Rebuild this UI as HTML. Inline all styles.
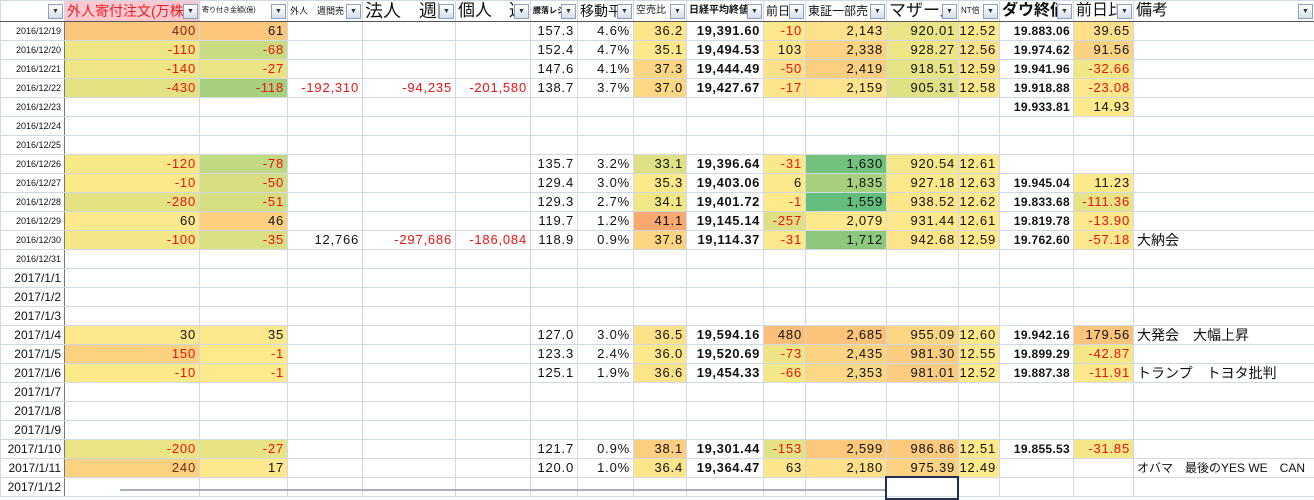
<!DOCTYPE html>
<html><head><meta charset="utf-8">
<style>
body{margin:0;width:1314px;height:491px;overflow:hidden;background:#fff;font-family:"Liberation Sans","Noto Sans CJK JP",sans-serif;}
table{border-collapse:collapse;table-layout:fixed;position:absolute;left:0;top:0;width:1314px;}
td{border:1px solid #d0d7e5;height:18px;padding:0 3px 0 0;text-align:right;font-size:13px;letter-spacing:0.8px;white-space:nowrap;overflow:hidden;color:#111;line-height:18px;}
tr.h td{height:20px;border-bottom:1px solid #555;text-align:left;padding:0 0 0 2px;position:relative;letter-spacing:0;}
td.d{font-size:9px;letter-spacing:0;border-right:1px solid #777;}
td.d2{font-size:12px;letter-spacing:0;border-right:1px solid #777;}
.r{color:#f01010}
.m{color:#802010}
.b{font-weight:bold;letter-spacing:0.6px}
.db{font-weight:bold;font-size:12px;letter-spacing:0.3px}
td.n{text-align:left;padding-left:3px;font-size:14px;letter-spacing:0}
.f{position:absolute;right:1px;top:3px;width:13px;height:13px;border:1px solid #8aa0c0;background:linear-gradient(#fff,#d6deea);font-size:7px;line-height:13px;text-align:center;color:#333;}
.hd{display:block;overflow:hidden;white-space:nowrap;margin-right:16px;}
</style></head><body>
<table>
<colgroup><col style="width:64px"><col style="width:135px"><col style="width:88px"><col style="width:75px"><col style="width:93px"><col style="width:75px"><col style="width:47px"><col style="width:56px"><col style="width:53px"><col style="width:77px"><col style="width:42px"><col style="width:81px"><col style="width:72px"><col style="width:41px"><col style="width:74px"><col style="width:60px"><col style="width:181px"></colgroup>
<tr class="h">
<td><span class="f">▼</span></td>
<td style="background:#ffc7ce;color:#e8202a;font-size:14px"><span class="hd">外人寄付注文(万株)</span><span class="f">▼</span></td>
<td style="font-size:7px"><span class="hd">寄り付き金額(億)</span><span class="f">▼</span></td>
<td style="font-size:9px"><span class="hd">外人　週間売</span><span class="f">▼</span></td>
<td style="font-size:18px"><span class="hd">法人　週間</span><span class="f">▼</span></td>
<td style="font-size:17px"><span class="hd">個人　週</span><span class="f">▼</span></td>
<td style="font-size:8px;font-weight:bold"><span class="hd">騰落レシオ</span><span class="f">▼</span></td>
<td style="font-size:14px"><span class="hd">移動平</span><span class="f">▼</span></td>
<td style="font-size:10px"><span class="hd">空売比</span><span class="f">▼</span></td>
<td style="font-size:10px;font-weight:bold"><span class="hd">日経平均終値</span><span class="f">▼</span></td>
<td style="font-size:12px"><span class="hd">前日</span><span class="f">▼</span></td>
<td style="font-size:12px"><span class="hd">東証一部売</span><span class="f">▼</span></td>
<td style="font-size:17px"><span class="hd">マザーズ</span><span class="f">▼</span></td>
<td style="font-size:8px"><span class="hd">NT倍</span><span class="f">▼</span></td>
<td style="font-size:16px;font-weight:bold"><span class="hd">ダウ終値</span><span class="f">▼</span></td>
<td style="font-size:16px"><span class="hd">前日比</span><span class="f">▼</span></td>
<td style="font-size:16px"><span class="hd">備考</span><span class="f">▼</span></td>
</tr>
<tr><td class="d">2016/12/19</td><td class="m" style="background:#fbc77c">400</td><td style="background:#fcc77c">61</td><td></td><td></td><td></td><td>157.3</td><td>4.6%</td><td style="background:#fde68a">36.2</td><td class="b">19,391.60</td><td class="r" style="background:#fee88b">-10</td><td style="background:#fde18a">2,143</td><td style="background:#e9e486">920.01</td><td style="background:#fee98b">12.52</td><td class="db">19.883.06</td><td style="background:#fee08a">39.65</td><td></td></tr>
<tr><td class="d">2016/12/20</td><td class="r" style="background:#eee585">-110</td><td class="r" style="background:#c8db80">-68</td><td></td><td></td><td></td><td>152.4</td><td>4.7%</td><td style="background:#fde88b">35.1</td><td class="b">19,494.53</td><td style="background:#fde58a">103</td><td style="background:#fdd383">2,338</td><td style="background:#f0e586">928.27</td><td style="background:#fee28a">12.56</td><td class="db">19.974.62</td><td style="background:#fcd282">91.56</td><td></td></tr>
<tr><td class="d">2016/12/21</td><td class="r" style="background:#eee585">-140</td><td class="r" style="background:#e9e485">-27</td><td></td><td></td><td></td><td>147.6</td><td>4.1%</td><td style="background:#fdd583">37.3</td><td class="b">19,444.49</td><td class="r" style="background:#fde089">-50</td><td style="background:#fccf80">2,419</td><td style="background:#e6e385">918.51</td><td style="background:#fee389">12.59</td><td class="db">19.941.96</td><td class="r" style="background:#f2e787">-32.66</td><td></td></tr>
<tr><td class="d">2016/12/22</td><td class="r" style="background:#e3e283">-430</td><td class="r" style="background:#a6d07d">-118</td><td class="r">-192,310</td><td class="r">-94,235</td><td class="r">-201,580</td><td>138.7</td><td>3.7%</td><td style="background:#fdd884">37.0</td><td class="b">19,427.67</td><td class="r" style="background:#fee58a">-17</td><td style="background:#fee38a">2,159</td><td style="background:#dfe083">905.31</td><td style="background:#fee68a">12.58</td><td class="db">19.918.88</td><td class="r" style="background:#fde88b">-23.08</td><td></td></tr>
<tr><td class="d">2016/12/23</td><td></td><td></td><td></td><td></td><td></td><td></td><td></td><td></td><td></td><td></td><td></td><td></td><td></td><td class="db">19.933.81</td><td style="background:#fee98b">14.93</td><td></td></tr>
<tr><td class="d">2016/12/24</td><td></td><td></td><td></td><td></td><td></td><td></td><td></td><td></td><td></td><td></td><td></td><td></td><td></td><td></td><td></td><td></td></tr>
<tr><td class="d">2016/12/25</td><td></td><td></td><td></td><td></td><td></td><td></td><td></td><td></td><td></td><td></td><td></td><td></td><td></td><td></td><td></td><td></td></tr>
<tr><td class="d">2016/12/26</td><td class="r" style="background:#f7e888">-120</td><td class="r" style="background:#c1d980">-78</td><td></td><td></td><td></td><td>135.7</td><td>3.2%</td><td style="background:#dfe184">33.1</td><td class="b">19,396.64</td><td class="r" style="background:#fde98b">-31</td><td style="background:#72c17c">1,630</td><td style="background:#f5e888">920.54</td><td style="background:#fee98b">12.61</td><td></td><td></td><td></td></tr>
<tr><td class="d">2016/12/27</td><td class="r" style="background:#fbe98a">-10</td><td class="r" style="background:#d7de82">-50</td><td></td><td></td><td></td><td>129.4</td><td>3.0%</td><td style="background:#fbe98a">35.3</td><td class="b">19,403.06</td><td style="background:#fde98b">6</td><td style="background:#a7d07e">1,835</td><td style="background:#fbe98a">927.18</td><td style="background:#fee98b">12.63</td><td class="db">19.945.04</td><td style="background:#fee98b">11.23</td><td></td></tr>
<tr><td class="d">2016/12/28</td><td class="r" style="background:#e5e283">-280</td><td class="r" style="background:#d6de82">-51</td><td></td><td></td><td></td><td>129.3</td><td>2.7%</td><td style="background:#f1e787">34.1</td><td class="b">19,401.72</td><td class="r" style="background:#fee98b">-1</td><td style="background:#63be7b">1,559</td><td style="background:#fde68a">938.52</td><td style="background:#fee98b">12.62</td><td class="db">19.833.68</td><td class="r" style="background:#e8e485">-111.36</td><td></td></tr>
<tr><td class="d">2016/12/29</td><td style="background:#fde88b">60</td><td style="background:#fdd07f">46</td><td></td><td></td><td></td><td>119.7</td><td>1.2%</td><td style="background:#f9a970">41.1</td><td class="b">19,145.14</td><td class="r" style="background:#dfe083">-257</td><td style="background:#fde98b">2,079</td><td style="background:#fde88b">931.44</td><td style="background:#fee98b">12.61</td><td class="db">19.819.78</td><td class="r" style="background:#fde88b">-13.90</td><td></td></tr>
<tr><td class="d">2016/12/30</td><td class="r" style="background:#f4e787">-100</td><td class="r" style="background:#dbdf83">-35</td><td>12,766</td><td class="r">-297,686</td><td class="r">-186,084</td><td>118.9</td><td>0.9%</td><td style="background:#fdd583">37.8</td><td class="b">19,114.37</td><td class="r" style="background:#fde98b">-31</td><td style="background:#8cc87d">1,712</td><td style="background:#fde489">942.68</td><td style="background:#fee98b">12.59</td><td class="db">19.762.60</td><td class="r" style="background:#fde98b">-57.18</td><td class="n">大納会</td></tr>
<tr><td class="d">2016/12/31</td><td></td><td></td><td></td><td></td><td></td><td></td><td></td><td></td><td></td><td></td><td></td><td></td><td></td><td></td><td></td><td></td></tr>
<tr><td class="d2">2017/1/1</td><td></td><td></td><td></td><td></td><td></td><td></td><td></td><td></td><td></td><td></td><td></td><td></td><td></td><td></td><td></td><td></td></tr>
<tr><td class="d2">2017/1/2</td><td></td><td></td><td></td><td></td><td></td><td></td><td></td><td></td><td></td><td></td><td></td><td></td><td></td><td></td><td></td><td></td></tr>
<tr><td class="d2">2017/1/3</td><td></td><td></td><td></td><td></td><td></td><td></td><td></td><td></td><td></td><td></td><td></td><td></td><td></td><td></td><td></td><td></td></tr>
<tr><td class="d2">2017/1/4</td><td style="background:#fde98b">30</td><td style="background:#fde98b">35</td><td></td><td></td><td></td><td>127.0</td><td>3.0%</td><td style="background:#fde28a">36.5</td><td class="b">19,594.16</td><td style="background:#fcbf79">480</td><td style="background:#fcc47b">2,685</td><td style="background:#fcd783">955.09</td><td style="background:#fee98b">12.60</td><td class="db">19.942.16</td><td style="background:#fcc47b">179.56</td><td class="n">大発会　大幅上昇</td></tr>
<tr><td class="d2">2017/1/5</td><td class="r" style="background:#fcd281">150</td><td class="r" style="background:#fee98b">-1</td><td></td><td></td><td></td><td>123.3</td><td>2.4%</td><td style="background:#fde98b">36.0</td><td class="b">19,520.69</td><td class="r" style="background:#f0e586">-73</td><td style="background:#fcd382">2,435</td><td style="background:#fccc80">981.30</td><td style="background:#fee98b">12.55</td><td class="db">19.899.29</td><td class="r" style="background:#f4e787">-42.87</td><td></td></tr>
<tr><td class="d2">2017/1/6</td><td class="r" style="background:#fbe98a">-10</td><td class="r" style="background:#fee98b">-1</td><td></td><td></td><td></td><td>125.1</td><td>1.9%</td><td style="background:#fde48a">36.6</td><td class="b">19,454.33</td><td class="r" style="background:#f3e787">-66</td><td style="background:#fdd884">2,353</td><td style="background:#fccc80">981.01</td><td style="background:#fee98b">12.52</td><td class="db">19.887.38</td><td class="r" style="background:#fde88b">-11.91</td><td class="n">トランプ　トヨタ批判</td></tr>
<tr><td class="d2">2017/1/7</td><td></td><td></td><td></td><td></td><td></td><td></td><td></td><td></td><td></td><td></td><td></td><td></td><td></td><td></td><td></td><td></td></tr>
<tr><td class="d2">2017/1/8</td><td></td><td></td><td></td><td></td><td></td><td></td><td></td><td></td><td></td><td></td><td></td><td></td><td></td><td></td><td></td><td></td></tr>
<tr><td class="d2">2017/1/9</td><td></td><td></td><td></td><td></td><td></td><td></td><td></td><td></td><td></td><td></td><td></td><td></td><td></td><td></td><td></td><td></td></tr>
<tr><td class="d2">2017/1/10</td><td class="r" style="background:#ebe585">-200</td><td class="r" style="background:#e8e485">-27</td><td></td><td></td><td></td><td>121.7</td><td>0.9%</td><td style="background:#fdce80">38.1</td><td class="b">19,301.44</td><td class="r" style="background:#e4e284">-153</td><td style="background:#fcc87c">2,599</td><td style="background:#fcc97d">986.86</td><td style="background:#fee98b">12.51</td><td class="db">19.855.53</td><td class="r" style="background:#f4e787">-31.85</td><td></td></tr>
<tr><td class="d2">2017/1/11</td><td class="m" style="background:#fcd281">240</td><td style="background:#fde88b">17</td><td></td><td></td><td></td><td>120.0</td><td>1.0%</td><td style="background:#fde58a">36.4</td><td class="b">19,364.47</td><td style="background:#fde58a">63</td><td style="background:#fde089">2,180</td><td style="background:#fdd281">975.39</td><td style="background:#fee98b">12.49</td><td></td><td></td><td class="n" style="font-size:12px">オバマ　最後のYES WE　CAN</td></tr>
<tr><td class="d2">2017/1/12</td><td></td><td></td><td></td><td></td><td></td><td></td><td></td><td></td><td></td><td></td><td></td><td></td><td></td><td></td><td></td><td></td></tr>
</table>
<div style="position:absolute;left:885px;top:476px;width:70px;height:20px;border:2px solid #1f3050;"></div>
<div style="position:absolute;left:120px;top:489px;width:765px;height:2px;background:#a8b0c0;"></div>
</body></html>
